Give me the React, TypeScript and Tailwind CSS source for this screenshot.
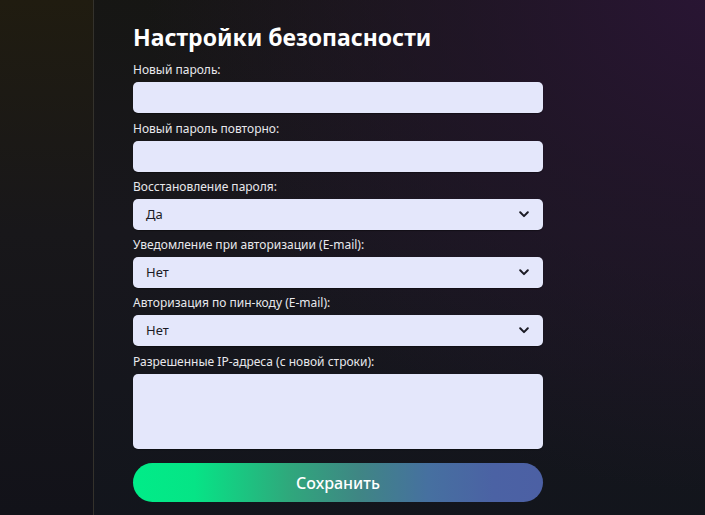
import { useState } from 'react';

const field =
  'h-[31px] w-full rounded-[5px] bg-[#e4e7fb] shadow-[0_1px_1px_rgba(0,0,0,0.35)] outline-none';

function Label({ children }: { children: string }) {
  return <div className="mb-[4px] h-[16px] text-[12px] leading-[16px] text-[#e8e8ec]">{children}</div>;
}

function Select({ value }: { value: string }) {
  return (
    <div className={`${field} flex items-center justify-between pl-[13px] pr-[14px]`}>
      <span className="text-[13px] text-[#1b1b24]">{value}</span>
      <svg width="10" height="7" viewBox="0 0 10 7" fill="none">
        <path d="M1.2 1.3 5 5.1 8.8 1.3" stroke="#1b1b24" strokeWidth="2" strokeLinecap="round" strokeLinejoin="round" />
      </svg>
    </div>
  );
}

export default function App() {
  const [pass, setPass] = useState('');
  const [pass2, setPass2] = useState('');

  return (
    <div
      className="flex h-[515px] w-[705px] overflow-hidden bg-[image:linear-gradient(180deg,#201c10_0%,#18171a_45%,#121219_100%)] pl-[93px]"
      style={{ fontFamily: '"Noto Sans", "Open Sans", sans-serif' }}>
      <div className="-mt-[20px] h-[560px] w-[640px] shrink-0 rounded-[20px] border border-[#34322c] bg-[image:radial-gradient(ellipse_at_100%_0%,#2a1535_0%,rgba(38,21,48,0.6)_30%,transparent_65%),linear-gradient(180deg,#161613_0%,#18171d_45%,#12151c_100%)] pl-[39px] pt-[43px]">
        <div className="w-[410px]">
          <h1 className="mb-[12px] text-[23px] font-bold leading-[26px] text-white">Настройки безопасности</h1>

          <Label>Новый пароль:</Label>
          <input type="password" value={pass} onChange={(e) => setPass(e.target.value)} className={field} />

          <div className="mt-[8px]">
            <Label>Новый пароль повторно:</Label>
            <input type="password" value={pass2} onChange={(e) => setPass2(e.target.value)} className={field} />
          </div>

          <div className="mt-[7px]">
            <Label>Восстановление пароля:</Label>
            <Select value="Да" />
          </div>

          <div className="mt-[7px]">
            <Label>Уведомление при авторизации (E-mail):</Label>
            <Select value="Нет" />
          </div>

          <div className="mt-[7px]">
            <Label>Авторизация по пин-коду (E-mail):</Label>
            <Select value="Нет" />
          </div>

          <div className="mt-[8px]">
            <Label>Разрешенные IP-адреса (с новой строки):</Label>
            <textarea className="block h-[75px] w-full resize-none rounded-[5px] bg-[#e4e7fb] shadow-[0_1px_1px_rgba(0,0,0,0.35)] outline-none" />
          </div>

          <button className="mt-[14px] flex h-[39px] w-full items-center justify-center rounded-full bg-[image:linear-gradient(90deg,#00ec88_0%,#06e486_15%,#2fa87c_38%,#3f8684_55%,#4670a0_72%,#4b62a4_88%,#4c60a4_100%)] text-[16px] font-medium text-white">
            Сохранить
          </button>
        </div>
      </div>
    </div>
  );
}
